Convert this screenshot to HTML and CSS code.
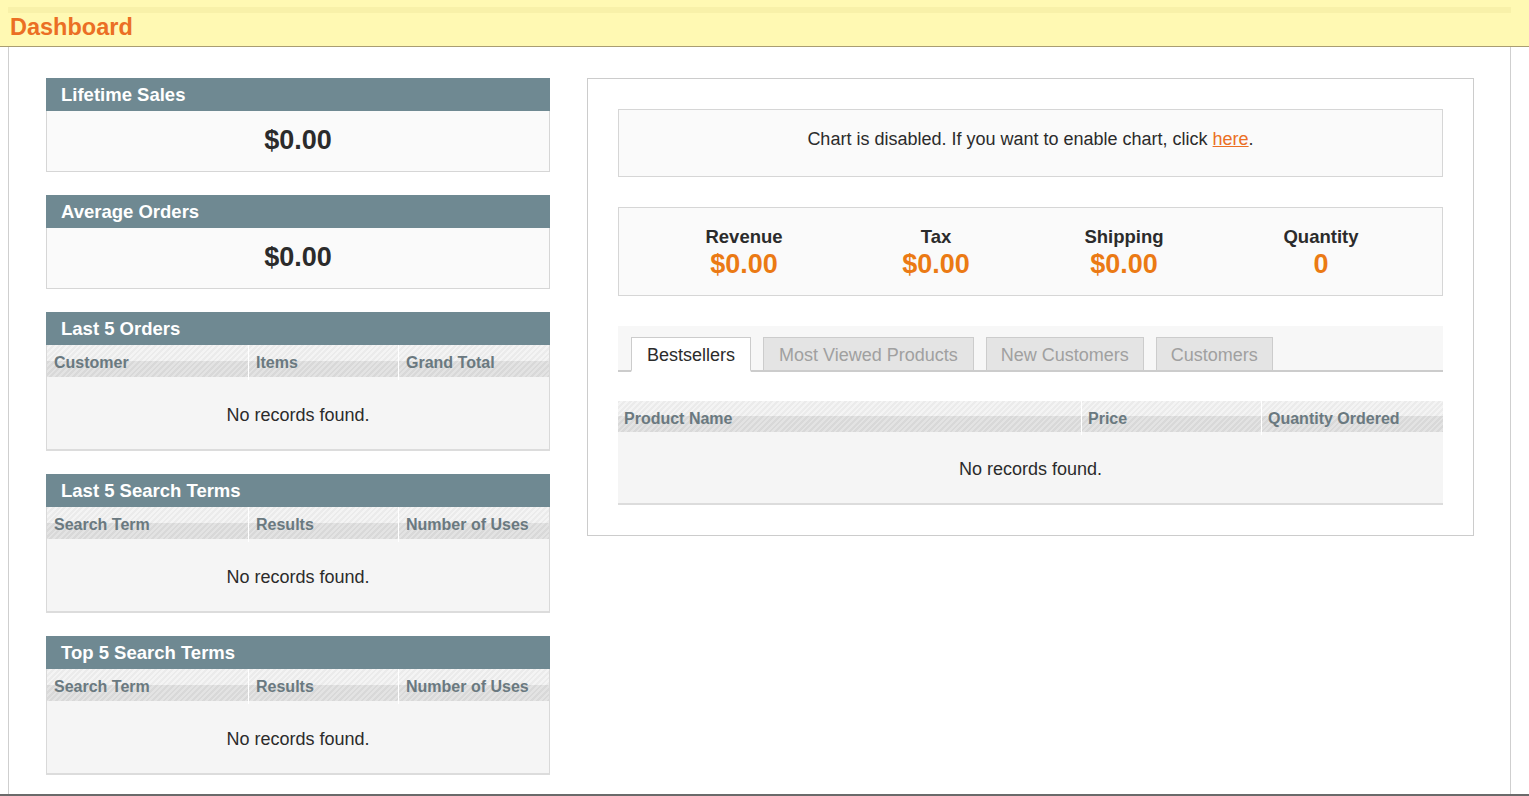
FILE: index.html
```html
<!DOCTYPE html>
<html>
<head>
<meta charset="utf-8">
<link rel="stylesheet" href="styles.css">
</head>
<body>
<div class="page">
  <div class="page-header">
    <div class="header-stripe"></div>
    <h1 class="page-title">Dashboard</h1>
  </div>
  <div class="main">
    <div class="left-col">
      <div class="box">
        <div class="box-head">Lifetime Sales</div>
        <div class="box-value">$0.00</div>
      </div>
      <div class="box">
        <div class="box-head">Average Orders</div>
        <div class="box-value">$0.00</div>
      </div>
      <div class="box">
        <div class="box-head">Last 5 Orders</div>
        <div class="grid">
          <div class="grid-head cols-left">
            <div class="th">Customer</div>
            <div class="th">Items</div>
            <div class="th">Grand Total</div>
          </div>
          <div class="grid-empty">No records found.</div>
        </div>
      </div>
      <div class="box">
        <div class="box-head">Last 5 Search Terms</div>
        <div class="grid">
          <div class="grid-head cols-left">
            <div class="th">Search Term</div>
            <div class="th">Results</div>
            <div class="th">Number of Uses</div>
          </div>
          <div class="grid-empty">No records found.</div>
        </div>
      </div>
      <div class="box">
        <div class="box-head">Top 5 Search Terms</div>
        <div class="grid">
          <div class="grid-head cols-left">
            <div class="th">Search Term</div>
            <div class="th">Results</div>
            <div class="th">Number of Uses</div>
          </div>
          <div class="grid-empty">No records found.</div>
        </div>
      </div>
    </div>
    <div class="right-panel">
      <div class="chart-box">Chart is disabled. If you want to enable chart, click <a class="link" href="#">here</a>.</div>
      <div class="totals">
        <div class="total"><div class="total-label">Revenue</div><div class="total-value">$0.00</div></div>
        <div class="total"><div class="total-label">Tax</div><div class="total-value">$0.00</div></div>
        <div class="total"><div class="total-label">Shipping</div><div class="total-value">$0.00</div></div>
        <div class="total"><div class="total-label">Quantity</div><div class="total-value">0</div></div>
      </div>
      <div class="tabs">
        <div class="tab active">Bestsellers</div>
        <div class="tab">Most Viewed Products</div>
        <div class="tab">New Customers</div>
        <div class="tab">Customers</div>
      </div>
      <div class="grid grid-right">
        <div class="grid-head cols-right">
          <div class="th">Product Name</div>
          <div class="th">Price</div>
          <div class="th">Quantity Ordered</div>
        </div>
        <div class="grid-empty">No records found.</div>
      </div>
    </div>
  </div>
</div>
</body>
</html>
```

FILE: styles.css
```css
* { box-sizing: border-box; }
html, body { margin: 0; padding: 0; }
body {
  font-family: "Liberation Sans", Arial, sans-serif;
  color: #2f2f2f;
  background: #fff;
  width: 1529px;
  height: 796px;
  overflow: hidden;
}
.page {
  height: 796px;
  border-bottom: 2px solid #6a6a6a;
  display: flex;
  flex-direction: column;
}
.page-header {
  height: 47px;
  background: #fff9b3;
  border-bottom: 1px solid #a99d72;
  padding-top: 7px;
  flex: none;
}
.header-stripe {
  height: 6px;
  margin: 0 18px 0 8px;
  background: #f8f1a9;
}
.page-title {
  margin: 0;
  padding: 1px 0 0 10px;
  font-size: 23.5px;
  line-height: 26px;
  font-weight: bold;
  color: #eb6f24;
}
.main {
  flex: 1;
  margin: 0 18px 0 8px;
  border-left: 1px solid #cfcfcf;
  border-right: 1px solid #cfcfcf;
  padding: 31px 0 0 37px;
  display: flex;
  align-items: flex-start;
  gap: 37px;
}
.left-col {
  width: 504px;
  display: flex;
  flex-direction: column;
  gap: 23px;
}
.box-head {
  height: 33px;
  background: #6f8992;
  color: #fff;
  font-weight: bold;
  font-size: 18.5px;
  line-height: 33px;
  padding-left: 15px;
}
.box-value {
  height: 61px;
  background: #fafafa;
  border: 1px solid #d6d6d6;
  border-top: 0;
  text-align: center;
  font-weight: bold;
  font-size: 27px;
  line-height: 59px;
  color: #2b2b2b;
}
.grid {
  border: 1px solid #d9d9d9;
  border-top: 0;
  border-bottom: 2px solid #dcdcdc;
  background: #f5f5f5;
}
.grid-head {
  height: 32px;
  display: grid;
  background:
    linear-gradient(to bottom, rgba(255,255,255,0.2) 0 50%, rgba(0,0,0,0.06) 50% 100%),
    repeating-linear-gradient(135deg, #e6e6e6 0 2px, #f1f1f1 2px 4px);
}
.cols-left { grid-template-columns: 201px 150px 1fr; }
.cols-right { grid-template-columns: 463px 180px 1fr; }
.th {
  font-size: 16px;
  font-weight: bold;
  color: #6a7980;
  line-height: 34px;
  padding-top: 1px;
  padding-left: 7px;
  border-left: 1px solid #fff;
}
.th:first-child { border-left: 0; }
.grid-empty {
  height: 72px;
  text-align: center;
  font-size: 18px;
  line-height: 76px;
  color: #2b2b2b;
}
.right-panel {
  width: 887px;
  border: 1px solid #cccccc;
  padding: 30px 30px 30px 30px;
  background: #fff;
}
.chart-box {
  height: 68px;
  background: #fafafa;
  border: 1px solid #d6d6d6;
  text-align: center;
  font-size: 18px;
  line-height: 58px;
  color: #2b2b2b;
}
.link { color: #eb6f24; text-decoration: underline; }
.totals {
  margin-top: 30px;
  height: 89px;
  background: #fafafa;
  border: 1px solid #d6d6d6;
  display: grid;
  grid-template-columns: 192px 192px 184px 210px;
  justify-content: start;
  padding-top: 19px;
  padding-left: 29px;
}
.total { text-align: center; }
.total-label {
  font-weight: bold;
  font-size: 18.5px;
  line-height: 20px;
  color: #2b2b2b;
}
.total-value {
  font-weight: bold;
  font-size: 27px;
  line-height: 29px;
  margin-top: 3px;
  color: #eb7a14;
}
.tabs {
  margin-top: 30px;
  height: 46px;
  background: #f7f7f7;
  border-bottom: 2px solid #cccccc;
  display: flex;
  align-items: flex-end;
  gap: 12px;
  padding-left: 13px;
}
.tab {
  height: 35px;
  margin-bottom: -2px;
  border: 1px solid #cccccc;
  border-bottom: 2px solid #cccccc;
  background: #e4e4e4;
  color: #a0a0a0;
  font-size: 18px;
  line-height: 35px;
  padding: 0 15px;
}
.tab:nth-child(n+3) { padding: 0 14px; }
.tab.active {
  background: #fff;
  color: #2b2b2b;
  border-bottom-color: #fff;
}
.grid-right {
  margin-top: 29px;
  border-left: 0;
  border-right: 0;
}
.grid-right .grid-head { height: 31px; }
.grid-right .th { padding-left: 6px; line-height: 33px; }
.grid-right .grid-empty { height: 71px; line-height: 75px; }
```
